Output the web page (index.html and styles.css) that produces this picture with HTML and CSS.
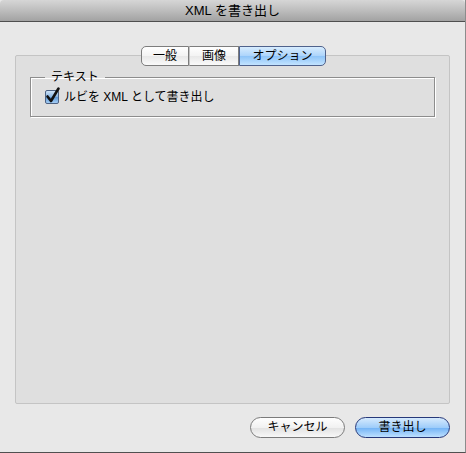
FILE: index.html
```html
<!DOCTYPE html>
<html>
  <head>
    <meta charset="UTF-8">
    <title>XML を書き出し</title>
    <link rel="stylesheet" href="styles.css">
  </head>
  <body>
    <div class="window">
      <div class="titlebar">XML を書き出し</div>

      <div class="body">
        <div class="tabs">
          <span class="tab tab-general">一般</span>
          <span class="tab tab-image">画像</span>
          <span class="tab tab-options on">オプション</span>
        </div>

        <div class="panel">
          <fieldset class="group">
            <legend>テキスト</legend>
            <label class="check">
              <span class="box">
                <svg width="15" height="16" viewBox="0 0 15 16">
                  <path d="M2.5 8.5 L6 13 L13.5 0.5" fill="none" stroke="#111" stroke-width="2.6" stroke-linecap="round" stroke-linejoin="round"/>
                </svg>
              </span>
              ルビを XML として書き出し
            </label>
          </fieldset>
        </div>

        <div class="buttons">
          <button class="btn">キャンセル</button>
          <button class="btn default">書き出し</button>
        </div>
      </div>
    </div>
  </body>
</html>
```

FILE: styles.css
```css
* {
  margin: 0;
  padding: 0;
  box-sizing: border-box;
}

body {
  width: 466px;
  height: 453px;
  background-color: #e8e8e8;
  font-family: "Liberation Sans", "Noto Sans CJK JP", sans-serif;
  font-size: 12px;
  color: #000;
}

.window {
  height: 453px;
  display: flex;
  flex-direction: column;
  border-right: 1px solid #8c8c8c;
  border-bottom: 1px solid #505050;
}

/* タイトルバー */
.titlebar {
  height: 22px;
  line-height: 21px;
  text-align: center;
  font-size: 13px;
  border-bottom: 1px solid #4f4f4f;
  border-radius: 4px 4px 0 0;
  background: linear-gradient(#d6d6d6, #bdbdbd 50%, #a2a2a2);
}

.body {
  flex: 1;
  display: flex;
  flex-direction: column;
  padding: 24px 15px 14px 15px;
}

/* タブ */
.tabs {
  display: flex;
  justify-content: center;
  padding-left: 2px;
  margin-bottom: -11px;
  position: relative;
  z-index: 1;
}

.tab {
  height: 20px;
  line-height: 18px;
  text-align: center;
  border: 1px solid #7d7d7d;
  border-left: 1px solid #c4c4c4;
  background: linear-gradient(#ffffff, #f3f3f3 50%, #e8e8e8 51%, #fafafa);
}

.tab-general {
  width: 48px;
  border-left-color: #7d7d7d;
  border-radius: 5px 0 0 5px;
}

.tab-image {
  width: 50px;
}

.tab-options {
  width: 87px;
  border-radius: 0 5px 5px 0;
}

.tab.on {
  border-color: #4f628c;
  background: linear-gradient(#d7ecfe, #acd4fb 50%, #8ec4f8 51%, #c2e3ff);
}

/* パネル */
.panel {
  flex: 1;
  border: 1px solid #c4c4c4;
  border-radius: 2px;
  background-color: #dfdfdf;
  padding: 14px 14px 0 14px;
}

.group {
  border: 1px solid #8d8d8d;
  box-shadow: inset 1px 1px 0 #fff, 1px 1px 0 #fff;
  padding: 5px 14px 11px 14px;
}

.group legend {
  padding: 0 6px;
  line-height: 14px;
}

.check {
  display: flex;
  align-items: center;
  gap: 5px;
  height: 16px;
  line-height: 16px;
}

.box {
  width: 14px;
  height: 14px;
  border: 1px solid #4d6283;
  border-radius: 2px;
  background: linear-gradient(#cfe3f7, #86b4e3 50%, #5f98d6 51%, #a3cdf5);
  position: relative;
}

.box svg {
  position: absolute;
  left: -1px;
  top: -3px;
  overflow: visible;
}

/* ボタン */
.buttons {
  display: flex;
  justify-content: flex-end;
  gap: 10px;
  margin-top: 13px;
}

.btn {
  width: 95px;
  height: 21px;
  line-height: 19px;
  border: 1px solid #7b7b7b;
  border-radius: 11px;
  font-family: inherit;
  font-size: 12px;
  color: #000;
  background: linear-gradient(#fefefe, #f1f1f1 50%, #e1e1e1 51%, #f8f8f8);
}

.btn.default {
  border-color: #27397a;
  background: linear-gradient(#d6eafd, #9fcdfa 50%, #71b2f5 51%, #bde0ff);
}
```
